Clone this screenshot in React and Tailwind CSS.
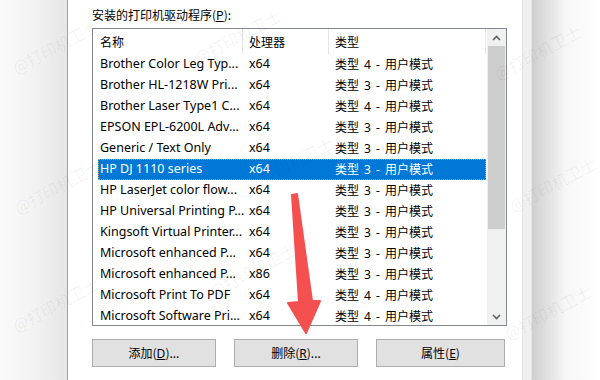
import React from 'react';

const rows = [
    ['Brother Color Leg Typ...', 'x64', '类型 4 - 用户模式'],
    ['Brother HL-1218W Pri...', 'x64', '类型 3 - 用户模式'],
    ['Brother Laser Type1 C...', 'x64', '类型 4 - 用户模式'],
    ['EPSON EPL-6200L Adv...', 'x64', '类型 3 - 用户模式'],
    ['Generic / Text Only', 'x64', '类型 3 - 用户模式'],
    ['HP DJ 1110 series', 'x64', '类型 3 - 用户模式'],
    ['HP LaserJet color flow...', 'x64', '类型 3 - 用户模式'],
    ['HP Universal Printing P...', 'x64', '类型 3 - 用户模式'],
    ['Kingsoft Virtual Printer...', 'x64', '类型 3 - 用户模式'],
    ['Microsoft enhanced P...', 'x64', '类型 3 - 用户模式'],
    ['Microsoft enhanced P...', 'x86', '类型 3 - 用户模式'],
    ['Microsoft Print To PDF', 'x64', '类型 4 - 用户模式'],
    ['Microsoft Software Pri...', 'x64', '类型 4 - 用户模式'],
];

const marks = [
    [8, 34], [190, 24], [490, 40],
    [10, 174], [242, 152], [505, 172],
    [8, 292], [205, 258], [500, 300],
];

const latin = { fontFamily: '"Noto Sans", "Noto Sans CJK SC", sans-serif' };

const Button = ({ label, hot, rest, className }) => (
    <button className={`h-[28px] bg-[#e1e1e1] border border-[#adadad] text-[12px] text-black ${className}`}>
        {label}(<span className="underline" style={latin}>{hot}</span>){rest}
    </button>
);

const App = () => {
    return (
        <div
            className="relative w-[600px] h-[380px] overflow-hidden flex bg-white"
            style={{ fontFamily: '"Noto Sans CJK SC", sans-serif' }}
        >
            {/* left window edge */}
            <div className="w-[68px] h-full bg-gradient-to-r from-[#fafafa] via-[#f3f3f3] to-[#e6e6e6] border-r border-[#a0a0a0]" />

            {/* dialog body */}
            <div className="w-[454px] h-full bg-white pl-[24px] pt-[7px]">
                <div className="text-[12px] leading-[16px] text-black h-[21px]">
                    安装的打印机驱动程序(<span className="underline">P</span>):
                </div>

                <div className="w-[415px] h-[298px] border border-[#828790] flex overflow-hidden">
                    <div className="flex-1 flex flex-col">
                        <div className="h-[25px] flex items-center text-[12px] text-black shrink-0">
                            <div className="w-[150px] pl-[7px] h-full flex items-center border-r border-[#e5e5e5]">名称</div>
                            <div className="w-[86px] pl-[6px] h-full flex items-center border-r border-[#e5e5e5]">处理器</div>
                            <div className="w-[157px] pl-[6px] h-full flex items-center border-r border-[#e5e5e5]">类型</div>
                        </div>
                        {rows.map((r, i) => {
                            const sel = i === 5;
                            return (
                                <div key={i} className="h-[21px] flex shrink-0 pl-[5px]">
                                    <div
                                        className={`w-[388px] flex items-center ${sel ? 'bg-[#0078d7] text-white outline outline-1 outline-dotted outline-[#c8a060] -outline-offset-1' : 'text-black'}`}
                                    >
                                        <div className="w-[145px] pl-[2px] whitespace-nowrap text-[12.5px]" style={latin}>{r[0]}</div>
                                        <div className="w-[86px] pl-[6px] text-[12.5px]" style={latin}>{r[1]}</div>
                                        <div className="pl-[6px] whitespace-nowrap text-[12px] [word-spacing:2px]" style={latin}>{r[2]}</div>
                                    </div>
                                </div>
                            );
                        })}
                    </div>

                    {/* scrollbar */}
                    <div className="w-[19px] h-full bg-[#f0f0f0] flex flex-col shrink-0">
                        <div className="h-[17px] flex items-center justify-center">
                            <svg width="9" height="6" viewBox="0 0 9 6"><path d="M1 5 L4.5 1.5 L8 5" fill="none" stroke="#606060" strokeWidth="1.6" /></svg>
                        </div>
                        <div className="mx-[1px] h-[183px] bg-[#cdcdcd]" />
                        <div className="flex-1" />
                        <div className="h-[17px] flex items-center justify-center">
                            <svg width="9" height="6" viewBox="0 0 9 6"><path d="M1 1 L4.5 4.5 L8 1" fill="none" stroke="#606060" strokeWidth="1.6" /></svg>
                        </div>
                    </div>
                </div>

                <div className="flex mt-[13px] gap-[18px]">
                    <Button label="添加" hot="D" rest="..." className="w-[124px]" />
                    <Button label="删除" hot="R" rest="..." className="w-[124px]" />
                    <Button label="属性" hot="E" rest="" className="w-[129px]" />
                </div>
            </div>

            {/* dialog right edge */}
            <div className="w-[10px] h-full bg-[#f0f0f0] border-l border-[#e3e3e3] border-r border-[#8a8a8a]" />
            <div className="flex-1 h-full bg-gradient-to-r from-[#cfcfcf] via-[#f7f7f7] to-white" />

            {/* watermarks */}
            {marks.map(([x, y], i) => (
                <div
                    key={i}
                    className="absolute text-[16px] text-black/[0.06] whitespace-nowrap -rotate-[28deg] pointer-events-none"
                    style={{ left: x, top: y }}
                >
                    @打印机卫士
                </div>
            ))}

            {/* red arrow */}
            <svg className="absolute left-0 top-0 pointer-events-none" width="600" height="380">
                <path d="M292 195 L297 194 L312 301 L320 301 L306 333 L288 303 L299 302 Z" fill="#f55050" stroke="#f55050" strokeWidth="2" strokeLinejoin="round" />
            </svg>
        </div>
    );
};

export default App;
